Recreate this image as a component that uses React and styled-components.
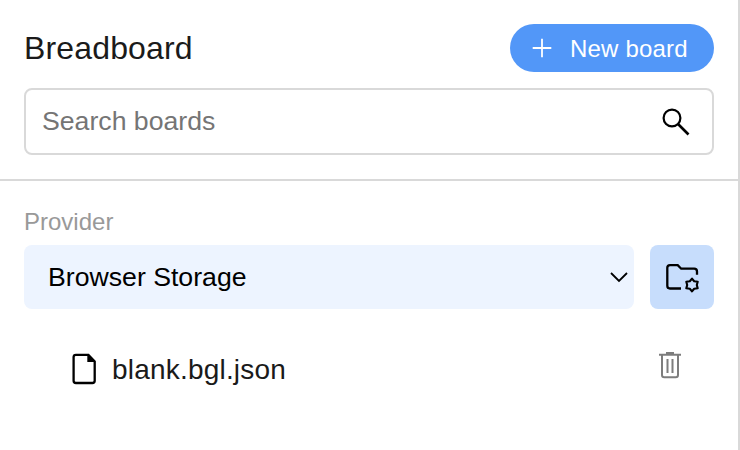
import React from "react";
import styled, { createGlobalStyle } from "styled-components";

const GlobalStyle = createGlobalStyle`
  * { box-sizing: border-box; }
  body { margin: 0; background: #fff; overflow: hidden; }
`;

const Panel = styled.main`
  width: 740px;
  height: 450px;
  border-right: 2px solid #d9d9d9;
  background: #fff;
  color: #1a1a1a;
  font-family: "Liberation Sans", Helvetica, Arial, sans-serif;
`;

const Header = styled.header`
  height: 181px;
  padding: 24px 24px 0;
  border-bottom: 2px solid #d9d9d9;
`;

const TitleRow = styled.div`
  display: flex;
  align-items: center;
  justify-content: space-between;
  height: 48px;
`;

const Title = styled.h1`
  margin: 0;
  font-size: 32px;
  line-height: 48px;
  font-weight: 400;
  letter-spacing: 0.15px;
`;

const NewBoardButton = styled.button`
  display: flex;
  align-items: center;
  gap: 18px;
  width: 204px;
  height: 48px;
  padding: 0 0 0 22px;
  border: 0;
  border-radius: 24px;
  background: #5297f8;
  color: #fff;
  font: 24px/48px "Liberation Sans", Helvetica, Arial, sans-serif;
  letter-spacing: 0.2px;
  white-space: nowrap;
`;

const ButtonLabel = styled.span`
  padding-top: 2px;
  line-height: 46px;
`;

const Icon = styled.svg`
  display: block;
  flex: none;
  fill: none;
  stroke: currentColor;
  stroke-width: ${({ $weight }) => $weight || 2};
`;

const SearchBox = styled.label`
  display: flex;
  align-items: center;
  justify-content: space-between;
  height: 67px;
  margin-top: 16px;
  padding: 0 22px 0 16px;
  border: 2px solid #d9d9d9;
  border-radius: 8px;
  color: #000;
`;

const SearchInput = styled.input`
  width: 500px;
  height: 60px;
  padding: 0;
  border: 0;
  outline: 0;
  background: transparent;
  font: 26.667px "Liberation Sans", Helvetica, Arial, sans-serif;
  &::placeholder { color: #757575; opacity: 1; }
`;

const Content = styled.section`
  padding: 27px 24px 0;
`;

const ProviderLabel = styled.div`
  height: 37px;
  color: #999;
  font-size: 24px;
  line-height: 28px;
`;

const ProviderRow = styled.div`
  display: flex;
  gap: 16px;
  height: 64px;
`;

const ProviderSelect = styled.button`
  display: flex;
  flex: 1;
  align-items: center;
  justify-content: space-between;
  padding: 0 5px 0 24px;
  border: 0;
  border-radius: 8px;
  background: #edf4ff;
  color: #000;
  font: 26.667px "Liberation Sans", Helvetica, Arial, sans-serif;
`;

const SettingsButton = styled.button`
  display: grid;
  place-items: center;
  width: 64px;
  padding: 0;
  border: 0;
  border-radius: 8px;
  background: #c7ddfc;
  color: #000;
`;

const BoardRow = styled.div`
  display: flex;
  align-items: center;
  justify-content: space-between;
  height: 48px;
  margin-top: 36px;
  padding: 0 28px 0 44px;
`;

const BoardName = styled.div`
  display: flex;
  align-items: center;
  gap: 12px;
  font-size: 28px;
  letter-spacing: 0.2px;
`;

const FileName = styled.span`
  padding-top: 2px;
  line-height: 46px;
`;

const FileIcon = styled(Icon)`
  color: #000;
`;

const DeleteButton = styled.button`
  padding: 0;
  margin-bottom: 8px;
  border: 0;
  background: none;
  color: #7d7d7d;
`;

export default function App() {
  return (
    <Panel>
      <GlobalStyle />
      <Header>
        <TitleRow>
          <Title>Breadboard</Title>
          <NewBoardButton>
            <Icon $weight={1.8} width="20" height="20" viewBox="0 0 20 20">
              <path d="M10 .7v18.6M.7 10h18.6" />
            </Icon>
            <ButtonLabel>New board</ButtonLabel>
          </NewBoardButton>
        </TitleRow>
        <SearchBox>
          <SearchInput placeholder="Search boards" />
          <Icon width="28" height="28" viewBox="662 108 28 28">
            <circle cx="672" cy="118" r="8.4" strokeWidth="2.2" />
            <path d="m678 124 10.5 10.5" strokeWidth="2.6" />
          </Icon>
        </SearchBox>
      </Header>
      <Content>
        <ProviderLabel>Provider</ProviderLabel>
        <ProviderRow>
          <ProviderSelect>
            Browser Storage
            <Icon $weight={1.8} width="20" height="12" viewBox="609 271 20 12">
              <path d="m611 273 8 8 8-8" />
            </Icon>
          </ProviderSelect>
          <SettingsButton aria-label="Provider settings">
            <Icon $weight={2.3} width="36" height="36" viewBox="664 259 36 36">
              <path d="M681 288.5h-11q-2.7 0-2.7-2.7v-18q0-2.7 2.7-2.7h7.7l3.5 3.6h13q2.8 0 2.8 2.7v3.3" />
              <path
                strokeWidth="2.1"
                strokeLinejoin="round"
                d="m692 278.6 2.2 2.6 3.5.5-.9 3.3.9 3.3-3.5.5-2.2 2.6-2.2-2.6-3.5-.5.9-3.3-.9-3.3 3.5-.5z"
              />
            </Icon>
          </SettingsButton>
        </ProviderRow>
        <BoardRow>
          <BoardName>
            <FileIcon $weight={2.3} width="32" height="32" viewBox="68 353 32 32">
              <path d="M75.9 354.8h12.5l6.3 6.6v19.3q0 2.3-2.3 2.3h-16.5q-2.3 0-2.3-2.3v-23.6q0-2.3 2.3-2.3z" />
              <path fill="currentColor" stroke="none" d="M87.3 354v8h8z" />
            </FileIcon>
            <FileName>blank.bgl.json</FileName>
          </BoardName>
          <DeleteButton aria-label="Delete board">
            <Icon width="32" height="32" viewBox="654 349 32 32">
              <path d="M659 354.7h22M666 353h8M662 355v20q0 2.3 2.3 2.3h11.4q2.3 0 2.3-2.3v-20M667.5 359v14M672.5 359v14" />
            </Icon>
          </DeleteButton>
        </BoardRow>
      </Content>
    </Panel>
  );
}
